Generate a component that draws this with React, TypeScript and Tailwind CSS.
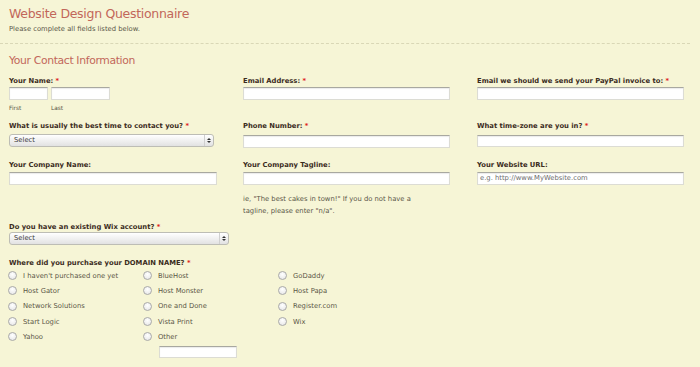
import type { ReactNode } from "react";

const Req = () => <span className="text-[#e0261c]"> *</span>;

const Label = ({ children, req }: { children: ReactNode; req?: boolean }) => (
  <div className="h-[10px] leading-[10px] text-[6.8px] font-bold text-[#3b2c1d] whitespace-nowrap">
    {children}
    {req && <Req />}
  </div>
);

const TextBox = ({ w, h = "h-[14px]", placeholder }: { w: string; h?: string; placeholder?: string }) => (
  <div
    className={`${w} ${h} bg-white border border-[#dcdcd4] border-t-[#a8a8a0] shadow-[inset_0_1px_1px_rgba(0,0,0,0.08)] px-[2px] flex items-center text-[6.8px] text-[#6d6d6d]`}
  >
    {placeholder}
  </div>
);

const SelectBox = ({ w }: { w: string }) => (
  <div
    className={`${w} h-[13px] rounded-[3px] border border-[#bdbdb5] bg-gradient-to-b from-white to-[#e2e2e2] flex items-center text-[6.8px] text-[#3a3a3a]`}
  >
    <span className="flex-1 pl-[4px]">Select</span>
    <span className="w-[9px] h-full border-l border-[#d0d0d0] flex flex-col items-center justify-center gap-[1px]">
      <span className="w-0 h-0 border-l-[2px] border-r-[2px] border-b-[2px] border-l-transparent border-r-transparent border-b-[#333]" />
      <span className="w-0 h-0 border-l-[2px] border-r-[2px] border-t-[2px] border-l-transparent border-r-transparent border-t-[#333]" />
    </span>
  </div>
);

const Radio = ({ label }: { label: string }) => (
  <div className="h-[15.33px] flex items-center">
    <span className="w-[9px] h-[9px] rounded-full border border-[#a9a9a9] bg-[radial-gradient(circle_at_50%_35%,#ffffff,#e4e4e4)] shrink-0" />
    <span className="ml-[6px] text-[6.8px] text-[#5b5646] whitespace-nowrap">{label}</span>
  </div>
);

const col1 = ["I haven't purchased one yet", "Host Gator", "Network Solutions", "Start Logic", "Yahoo"];
const col2 = ["BlueHost", "Host Monster", "One and Done", "Vista Print", "Other"];
const col3 = ["GoDaddy", "Host Papa", "Register.com", "Wix"];

export default function App() {
  return (
    <div className="w-[700px] h-[367px] overflow-hidden bg-[#f6f5d6] font-['DejaVu_Sans',sans-serif]">
      {/* header */}
      <div className="px-[9px] pt-[5px]">
        <h1 className="text-[12.5px] tracking-[-0.3px] leading-[17px] text-[#c2675a]">Website Design Questionnaire</h1>
        <p className="mt-[3px] text-[6.8px] leading-[9px] text-[#5a5648]">Please complete all fields listed below.</p>
      </div>
      <div className="mt-[9px] w-[690px] border-t border-dashed border-[#d9d7b6]" />

      <h2 className="px-[9px] mt-[10px] text-[10.8px] tracking-[-0.35px] leading-[14px] text-[#c2675a]">
        Your Contact Information
      </h2>

      <div className="pl-[9px] mt-[8px]">
        {/* row 1 */}
        <div className="grid grid-cols-[234px_234px_234px]">
          <div>
            <Label req>Your Name:</Label>
            <div className="mt-[1px] flex gap-[3px]">
              <TextBox w="w-[39px]" h="h-[13px]" />
              <TextBox w="w-[59px]" h="h-[13px]" />
            </div>
            <div className="mt-[3px] flex text-[5.8px] leading-[10px] text-[#5a5648]">
              <span className="w-[42px]">First</span>
              <span>Last</span>
            </div>
          </div>
          <div>
            <Label req>Email Address:</Label>
            <div className="mt-[1px]">
              <TextBox w="w-[207px]" h="h-[13px]" />
            </div>
          </div>
          <div>
            <Label req>Email we should we send your PayPal invoice to:</Label>
            <div className="mt-[1px]">
              <TextBox w="w-[207px]" h="h-[13px]" />
            </div>
          </div>
        </div>

        {/* row 2 */}
        <div className="mt-[8px] grid grid-cols-[234px_234px_234px]">
          <div>
            <Label req>What is usually the best time to contact you?</Label>
            <div className="mt-[3px]">
              <SelectBox w="w-[205px]" />
            </div>
          </div>
          <div>
            <Label req>Phone Number:</Label>
            <div className="mt-[4px]">
              <TextBox w="w-[207px]" h="h-[13px]" />
            </div>
          </div>
          <div>
            <Label req>What time-zone are you in?</Label>
            <div className="mt-[4px]">
              <TextBox w="w-[207px]" h="h-[12px]" />
            </div>
          </div>
        </div>

        {/* row 3 */}
        <div className="mt-[12px] grid grid-cols-[234px_234px_234px]">
          <div>
            <Label>Your Company Name:</Label>
            <div className="mt-[2px]">
              <TextBox w="w-[208px]" h="h-[13px]" />
            </div>
          </div>
          <div>
            <Label>Your Company Tagline:</Label>
            <div className="mt-[2px]">
              <TextBox w="w-[207px]" h="h-[13px]" />
            </div>
            <p className="mt-[8px] whitespace-nowrap text-[6.8px] leading-[12px] text-[#5a5648]">
              ie, "The best cakes in town!" If you do not have a
              <br />
              tagline, please enter "n/a".
            </p>
          </div>
          <div>
            <Label>Your Website URL:</Label>
            <div className="mt-[2px]">
              <TextBox w="w-[207px]" h="h-[13px]" placeholder="e.g. http://www.MyWebsite.com" />
            </div>
          </div>
        </div>

        {/* row 4 */}
        <div className="mt-[5px]">
          <Label req>Do you have an existing Wix account?</Label>
          <div className="mt-0">
            <SelectBox w="w-[220px]" />
          </div>
        </div>

        {/* domain */}
        <div className="mt-[13px]">
          <Label req>Where did you purchase your DOMAIN NAME?</Label>
          <div className="-ml-[1px] grid grid-cols-[135px_135px_135px]">
            <div>
              {col1.map((l) => (
                <Radio key={l} label={l} />
              ))}
            </div>
            <div>
              {col2.map((l) => (
                <Radio key={l} label={l} />
              ))}
              <div className="mt-[1px] ml-[16px]">
                <TextBox w="w-[78px]" h="h-[12px]" />
              </div>
            </div>
            <div>
              {col3.map((l) => (
                <Radio key={l} label={l} />
              ))}
            </div>
          </div>
        </div>
      </div>
    </div>
  );
}
